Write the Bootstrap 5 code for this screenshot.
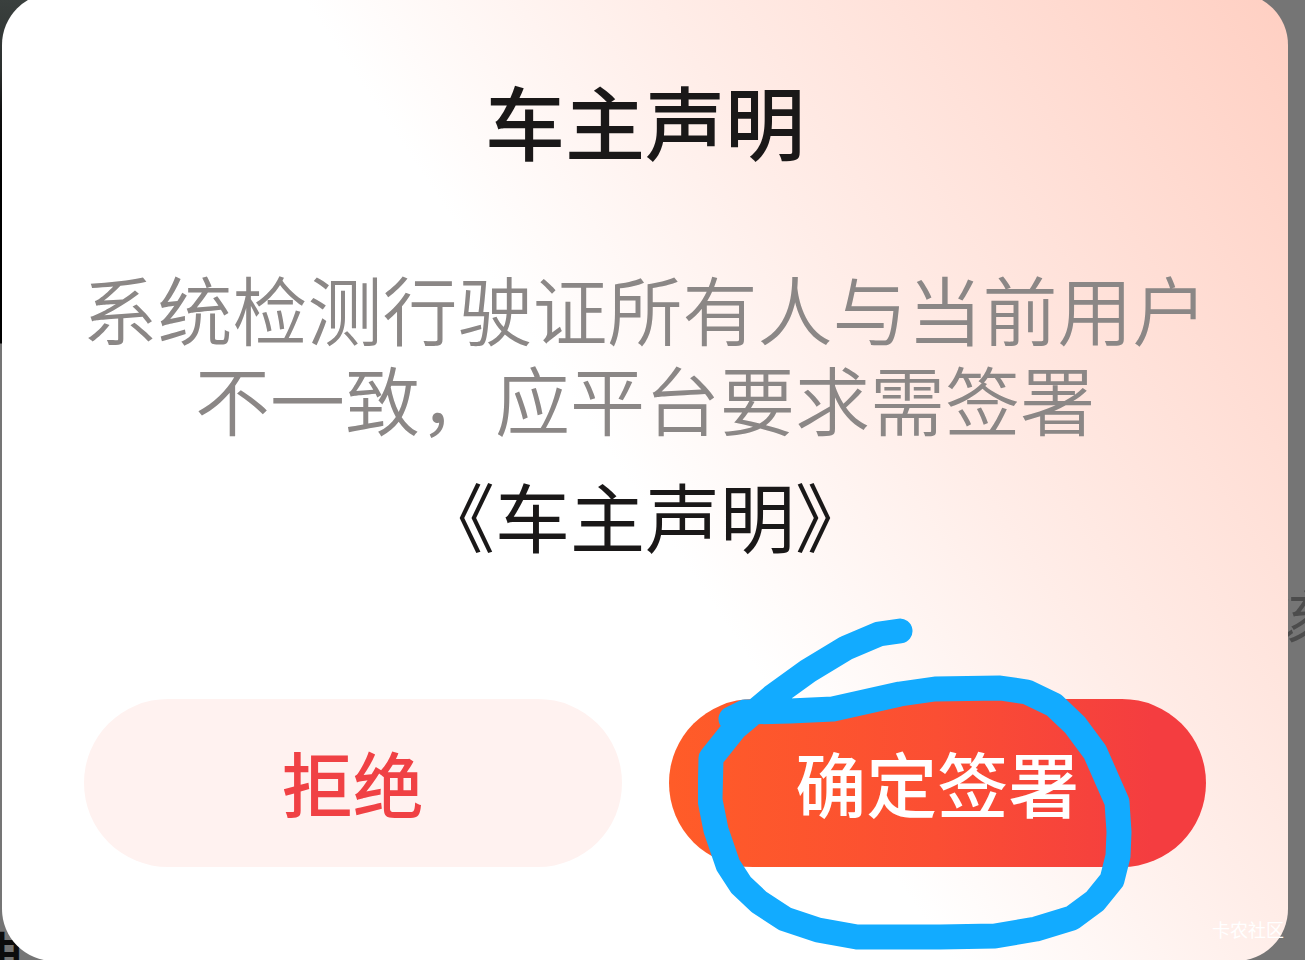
<!DOCTYPE html>
<html lang="zh-CN">
<head>
<meta charset="utf-8">
<meta name="viewport" content="width=device-width, initial-scale=1">
<title>车主声明</title>
<link href="https://cdn.jsdelivr.net/npm/bootstrap@5.3.0/dist/css/bootstrap.min.css" rel="stylesheet">
<style>
  body { font-family: "Noto Sans CJK SC", sans-serif; background: #757575; }
  .backdrop-page { background: linear-gradient(#3a403e 0, #2c302f 70px, #111 110px, #000 180px, #000 343px, #757575 344px) left top / 30px 100% no-repeat #757575; }
  .behind { position: absolute; line-height: 1; z-index: 0; }
  .behind-right { right: -22px; top: 585px; font-size: 56px; color: #4c4c4c; }
  .behind-left { left: -19px; bottom: -11px; font-size: 42px; font-weight: 700; color: #0c0c0c; }
  .sheet { z-index: 1; margin: -7px 17px -1px 2px; padding: 78px 82px 94px; border-radius: 52px;
    background: linear-gradient(56deg, #fff 49%, #ffede8 67%, #ffcfc2 100%); }
  .sheet-title { font-size: 80px; line-height: 96px; font-weight: 500; color: #1a1818; margin-bottom: 96px; }
  .sheet-text, .sheet-link { font-size: 75px; line-height: 90px; }
  .sheet-text { font-weight: 350; color: #8b8786; margin: 0 -8px 27px; }
  .sheet-link { font-weight: 400; color: #1a1818; margin-bottom: 139px; }
  .actions { gap: 47px; }
  .action { height: 168px; font-size: 71px; line-height: 1; font-weight: 500; border: 0; padding: 0 0 4px; }
  .action-refuse, .action-refuse:hover { background: #fff2f0; color: #f04144; }
  .action-sign, .action-sign:hover { background: linear-gradient(90deg, #ff5c28, #fb4e33 50%, #f43d40 90%); color: #fff; }
  .scribble { left: 29px; top: -81px; pointer-events: none; }
  .watermark { right: 21px; bottom: 19px; font-size: 18px; line-height: 24px; color: #fff; }
</style>
</head>
<body>
<div class="backdrop-page position-relative overflow-hidden min-vh-100 d-flex flex-column">
  <span class="behind behind-right">该</span>
  <span class="behind behind-left">由</span>
  <main class="sheet position-relative flex-grow-1 text-center" role="dialog" aria-labelledby="title">
    <h1 class="sheet-title" id="title">车主声明</h1>
    <p class="sheet-text">系统检测行驶证所有人与当前用户不一致，应平台要求需签署</p>
    <p class="sheet-link"><a href="#" class="text-reset text-decoration-none">《车主声明》</a></p>
    <div class="actions d-flex">
      <div class="flex-fill w-50">
        <button type="button" class="btn action action-refuse rounded-pill w-100">拒绝</button>
      </div>
      <div class="flex-fill w-50 position-relative">
        <button type="button" class="btn action action-sign rounded-pill w-100">确定签署</button>
        <svg class="scribble position-absolute" width="434" height="332" viewBox="698 618 434 332" fill="none" stroke="#12abff" stroke-width="25" stroke-linecap="round" stroke-linejoin="round" aria-hidden="true">
          <path d="M900 631L879 634L846 648L808 671L772 697L735 728L711 758L710 800L716 830L728 865L741 885L759 902L785 919L818 930L857 937L940 937L995 936L1036 929L1072 918L1095 901L1112 880L1118 856L1119 832L1117 802L1095 752L1075 725L1054 705L1027 692L1000 688L935 689L900 694L833 709L790 711L745 712L731 719"/>
        </svg>
      </div>
    </div>
  </main>
  <span class="watermark position-absolute z-2">卡农社区</span>
</div>
<script src="https://cdn.jsdelivr.net/npm/bootstrap@5.3.0/dist/js/bootstrap.bundle.min.js"></script>
</body>
</html>
